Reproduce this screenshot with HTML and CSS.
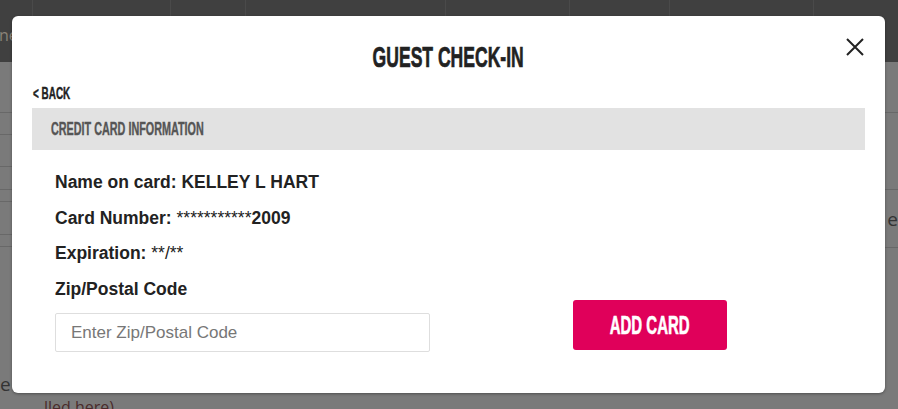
FILE: index.html
```html
<!DOCTYPE html>
<html lang="en">
<head>
<meta charset="utf-8">
<title>Guest Check-In</title>
<link rel="stylesheet" href="styles.css">
</head>
<body>
<div class="page">
  <header class="topbar">
    <div class="cell cell-a"><span class="peek">ne</span></div>
    <div class="cell cell-b"></div>
    <div class="cell cell-c"></div>
    <div class="cell cell-d"></div>
    <div class="cell cell-e"></div>
    <div class="cell cell-f"></div>
    <div class="cell cell-g"></div>
    <div class="cell cell-h"></div>
  </header>
  <div class="table">
    <div class="col col-left">
      <div class="row r51"></div>
      <div class="row r22"></div>
      <div class="row r32"></div>
      <div class="row r23"></div>
      <div class="row r12"></div>
      <div class="row r33"></div>
      <div class="row r12"></div>
      <div class="row-text"><span class="peek-dark">e</span></div>
    </div>
    <div class="col col-right">
      <div class="row r51"></div>
      <div class="row r77"></div>
      <div class="row r58 row-right-text"><span class="peek-dark">e</span></div>
    </div>
  </div>
  <p class="footnote">lled here)</p>
</div>

<div class="modal" role="dialog" aria-labelledby="modal-title">
  <button class="close" type="button" aria-label="Close">
    <svg width="18" height="18" viewBox="0 0 18 18" aria-hidden="true">
      <path d="M1 1 L17 17 M17 1 L1 17" stroke="#222" stroke-width="2" fill="none"/>
    </svg>
  </button>
  <h1 class="title" id="modal-title"><span class="cond">GUEST CHECK-IN</span></h1>
  <div class="body">
    <a class="back" href="#"><span class="cond cond-left">&lt; BACK</span></a>
    <div class="bar"><span class="cond cond-left">CREDIT CARD INFORMATION</span></div>
    <div class="details">
      <p class="line">Name on card: KELLEY L HART</p>
      <p class="line">Card Number: <span class="stars">***********</span>2009</p>
      <p class="line">Expiration: <span class="stars">**/**</span></p>
      <div class="form-row">
        <div class="field">
          <label class="line" for="zip">Zip/Postal Code</label>
          <input class="input" id="zip" type="text" placeholder="Enter Zip/Postal Code">
        </div>
        <button class="add" type="button"><span class="cond">ADD CARD</span></button>
      </div>
    </div>
  </div>
</div>
</body>
</html>
```

FILE: styles.css
```css
* { box-sizing: border-box; }

html, body {
  margin: 0;
  padding: 0;
  height: 100%;
}

body {
  background: #7a7a7a;
  font-family: "Liberation Sans", Arial, sans-serif;
  overflow: hidden;
}

/* ---------- background page (dimmed) ---------- */
.page {
  width: 898px;
  height: 409px;
}

.topbar {
  display: flex;
  height: 62px;
  background: #404040;
}

.cell {
  height: 100%;
  border-left: 1px solid #4a4a4a;
}
.cell-a { width: 32px; border-left: 0; }
.cell-b { width: 138px; }
.cell-c { width: 75px; }
.cell-d { width: 200px; }
.cell-e { width: 124px; }
.cell-f { width: 100px; }
.cell-g { width: 144px; }
.cell-h { flex: 1; }

.peek {
  display: block;
  padding-top: 24px;
  margin-left: -1px;
  font-family: "Open Sans", sans-serif;
  font-size: 16px;
  color: #8a8378;
}

.table {
  display: flex;
  justify-content: space-between;
}

.col { width: 449px; }

.row { border-bottom: 1px solid #686868; }
.r51 { height: 51px; }
.r22 { height: 22px; }
.r32 { height: 32px; }
.r23 { height: 23px; }
.r12 { height: 12px; }
.r33 { height: 33px; }
.r77 { height: 77px; }
.r58 { height: 58px; }

.row-text {
  padding-top: 124px;
}
.peek-dark {
  font-family: "Open Sans", sans-serif;
  font-size: 19px;
  color: #333;
}
.row-right-text {
  display: flex;
  align-items: center;
  justify-content: flex-end;
}

.footnote {
  margin: 0;
  padding-left: 44px;
  font-family: "Open Sans", sans-serif;
  font-size: 16px;
  line-height: 20px;
  color: #4a2b2b;
}

/* ---------- modal ---------- */
.modal {
  position: absolute;
  left: 12px;
  top: 16px;
  width: 873px;
  height: 377px;
  background: #fff;
  border-radius: 6px;
  box-shadow: 0 1px 3px rgba(0, 0, 0, 0.35);
}

.close {
  position: absolute;
  top: 22px;
  right: 21px;
  width: 18px;
  height: 18px;
  padding: 0;
  border: 0;
  background: none;
  cursor: pointer;
  display: block;
}
.close svg { display: block; }

.cond {
  display: inline-block;
  font-family: "Liberation Sans", sans-serif;
  font-weight: 700;
  transform: scaleX(0.6);
  transform-origin: center;
  white-space: nowrap;
  -webkit-text-stroke: 0.4px currentColor;
}
.cond-left { transform-origin: left center; }

.title {
  margin: 0;
  padding-top: 26px;
  text-align: center;
  font-size: 30px;
  line-height: 30px;
  color: #222;
  font-weight: 700;
}
.title .cond {
  transform: scaleX(0.585);
  -webkit-text-stroke: 0.7px currentColor;
}

.body {
  padding: 0 20px;
}

.back {
  display: block;
  margin-top: 14px;
  padding-left: 1px;
  font-size: 16px;
  line-height: 16px;
  color: #222;
  text-decoration: none;
}
.back .cond { transform: scaleX(0.62); }

.bar {
  display: flex;
  align-items: center;
  height: 42px;
  margin-top: 6px;
  padding-left: 19px;
  background: #e2e2e2;
  font-size: 18px;
  color: #555;
}

.details {
  padding: 21px 0 0 23px;
}

.line {
  display: block;
  margin: 0 0 12px;
  font-size: 17.5px;
  line-height: 23.5px;
  font-weight: 700;
  color: #222;
}

.stars { font-weight: 400; }

.form-row {
  display: flex;
  align-items: flex-end;
}

.field {
  width: 375px;
}
.field .line { margin-bottom: 12px; }

.input {
  display: block;
  width: 375px;
  height: 39px;
  padding: 0 15px;
  border: 1px solid #dedede;
  border-radius: 2px;
  font-family: "Liberation Sans", Arial, sans-serif;
  font-size: 17px;
  color: #333;
  outline: none;
}
.input::placeholder { color: #777; }

.add {
  width: 154px;
  height: 50px;
  margin: 0 0 2px 143px;
  border: 0;
  border-radius: 3px;
  background: #e0005a;
  color: #fff;
  font-size: 25px;
  line-height: 50px;
  padding: 0;
  cursor: pointer;
}
.add .cond { -webkit-text-stroke: 0.6px currentColor; }
```
